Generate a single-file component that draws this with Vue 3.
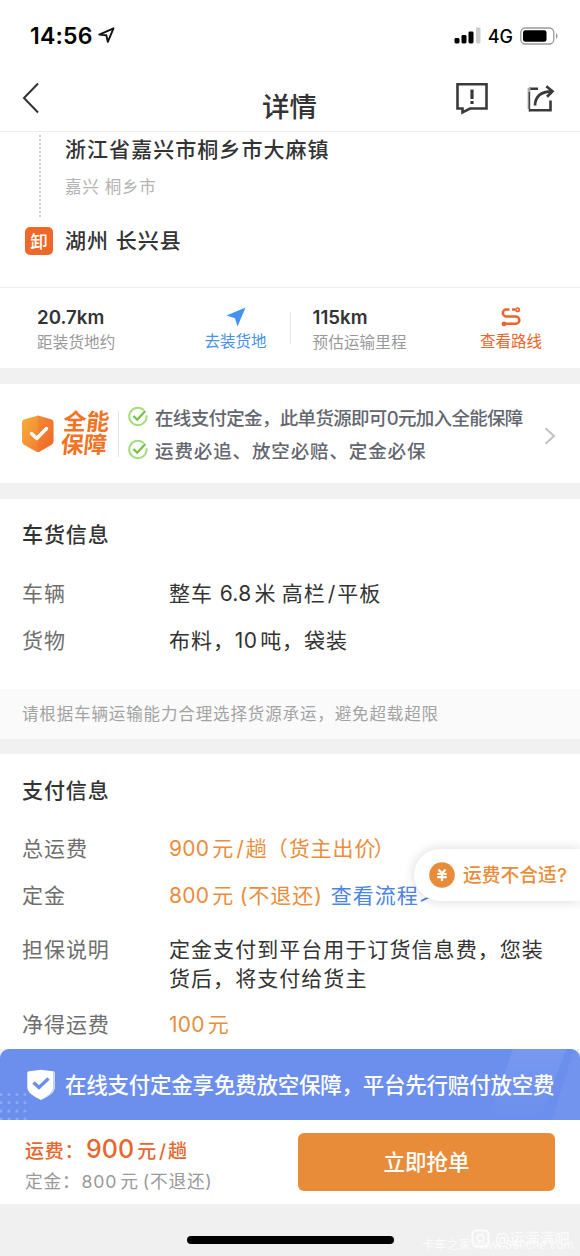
<script setup>
const dots = []
for (let r = 0; r < 4; r++) for (let c = 0; c < 4; c++) dots.push({ x: 1 + c * 8, y: 45.5 + r * 8.2 })
</script>

<template>
  <div class="page">
    <header class="top">
      <div class="status">
        <div class="status-left">
          <span class="time">14:56</span>
          <svg class="loc" width="17" height="17" viewBox="0 0 17 17"><path d="M1.300 7.600 15.500 1.300 9.800 14.800 8.300 8.200Z" fill="none" stroke="#111" stroke-width="1.900" stroke-linejoin="round" /></svg>
        </div>
        <div class="status-right">
          <svg width="28" height="18" viewBox="0 0 28 18">
            <rect x="0.5" y="11" width="5" height="5.5" rx="1.4" /><rect x="7.5" y="8" width="5" height="8.5" rx="1.4" />
            <rect x="14.5" y="4.5" width="5" height="12" rx="1.4" /><rect x="22" y="0.5" width="4.5" height="16" rx="1.4" fill="#ccc" />
          </svg>
          <span class="net">4G</span>
          <svg class="bat" width="39" height="18" viewBox="0 0 39 18">
            <rect x="0.8" y="1" width="33" height="16" rx="4.5" fill="none" stroke="#999" stroke-width="1.3" />
            <rect x="3" y="3.2" width="23.5" height="11.6" rx="2.4" /><path d="M36 6.3c2 .8 2 4.600 0 5.400z" fill="#999" />
          </svg>
        </div>
      </div>
      <div class="nav">
        <svg class="back" width="18" height="32" viewBox="0 0 18 32"><path d="M16 1.500 2 16 16 30.500" fill="none" stroke="#333" stroke-width="2" /></svg>
        <h1>详情</h1>
        <div class="tools">
          <svg width="34" height="33" viewBox="0 0 34 33">
            <path d="M2.500 2.300H31.500V26.500H15L7.500 30.300V26.500H2.500Z" fill="none" stroke="#3a3a3a" stroke-width="2.600" />
            <path d="M17 7.500V17M17 19V22" stroke="#3a3a3a" stroke-width="3.200" />
          </svg>
          <svg class="share" width="30" height="28" viewBox="0 0 30 28">
            <path d="M12 3.800H3M3 25.200H24.500V15.500" fill="none" stroke="#3a3a3a" stroke-width="2.600" />
            <path d="M3 3V24" stroke="#aaa" stroke-width="2.800" />
            <path d="M3.300 7V26.500" stroke="#3a3a3a" stroke-width="1.200" />
            <path d="M9 20.500C9.200 12 14 6.500 26 6.300M20.300 1.200 26.500 6.300 21 11.800" fill="none" stroke="#3a3a3a" stroke-width="2.700" />
          </svg>
        </div>
      </div>
    </header>

    <section class="route">
      <div class="from">
        <svg class="dash" width="2" height="86" viewBox="0 0 2 86"><path d="M1 3V85" stroke="#bbb" stroke-width="1.400" stroke-dasharray="2 2" /></svg>
        <div>
          <div class="place">浙江省嘉兴市桐乡市大麻镇</div>
          <div class="sub">嘉兴 桐乡市</div>
        </div>
      </div>
      <div class="to"><span class="badge">卸</span><span class="place">湖州 长兴县</span></div>
    </section>

    <section class="distance">
      <div class="km first"><b>20.7km</b><span>距装货地约</span></div>
      <div class="action blue">
        <svg width="20" height="20" viewBox="0 0 20 20"><path d="M19.500.500 11.500 19.500 9 11.200.500 8.500Z" fill="#4591f0" /></svg>
        <span>去装货地</span>
      </div>
      <i class="split"></i>
      <div class="km second"><b>115km</b><span>预估运输里程</span></div>
      <div class="action red">
        <svg width="20" height="20" viewBox="0 0 20 20">
          <g fill="none" stroke="#ed652c" stroke-width="2.500"><path d="M8.500 2.500H5.300a3.500 3.500 0 0 0 0 7H14.700a3.600 3.600 0 0 1 0 7.300H4M11 2.500H14" /><circle cx="16.600" cy="2.700" r="1.700" stroke-width="1.700" /></g>
          <circle cx="3" cy="16.900" r="2.400" fill="#ed652c" />
        </svg>
        <span>查看路线</span>
      </div>
    </section>

    <section class="protect">
      <svg width="34" height="38" viewBox="0 0 34 38">
        <defs><linearGradient id="sg" x1="0" y1="0" x2="1" y2=".6"><stop offset="0" stop-color="#f8b13c" /><stop offset="1" stop-color="#f0702c" /></linearGradient></defs>
        <path d="M17 .500 30.500 4.500Q32.500 5.200 32.500 7.500V26Q32.500 28.500 30.500 29.700L18.500 36.700Q17 37.500 15.500 36.700L3 29.700Q1 28.500 1 26V7.500Q1 5.200 3 4.500Z" fill="url(#sg)" />
        <path d="M17 .500 30.500 4.500Q32.500 5.200 32.500 7.500V26Q32.500 28.500 30.500 29.700L18.500 36.700L17 37Z" fill="#ef6a2c" opacity=".3" />
        <path d="M10.500 18.500 15.800 23.500 25.500 13.500" fill="none" stroke="#fff" stroke-width="3.500" stroke-linecap="round" stroke-linejoin="round" />
      </svg>
      <div class="brand"><span>全能</span><span>保障</span></div>
      <i class="bar"></i>
      <div class="perks">
        <div class="perk tight">
          <svg width="20" height="20" viewBox="0 0 20 20"><path d="M15.200 2.600A8.700 8.700 0 1 0 18.600 9" fill="none" stroke="#a3dd7b" stroke-width="2" stroke-linecap="round" /><path d="M5.500 9 9.200 12.700 17.300 4" fill="none" stroke="#74c044" stroke-width="2.200" /></svg>
          <span>在线支付定金，此单货源即可0元加入全能保障</span>
        </div>
        <div class="perk loose">
          <svg width="20" height="20" viewBox="0 0 20 20"><path d="M15.200 2.600A8.700 8.700 0 1 0 18.600 9" fill="none" stroke="#a3dd7b" stroke-width="2" stroke-linecap="round" /><path d="M5.500 9 9.200 12.700 17.300 4" fill="none" stroke="#74c044" stroke-width="2.200" /></svg>
          <span>运费必追、放空必赔、定金必保</span>
        </div>
      </div>
      <svg class="chev" width="12" height="18" viewBox="0 0 12 18"><path d="M1.500 1.200 10 9 1.500 16.800" fill="none" stroke="#c4c4c4" stroke-width="2.200" /></svg>
    </section>

    <section class="cargo">
      <h2>车货信息</h2>
      <div class="row"><span class="label">车辆</span><span>整车 <i class="n">6.8</i>米<i class="w"></i>高栏<i class="s">/</i>平板</span></div>
      <div class="row"><span class="label">货物</span><span>布料，<i class="n">10</i>吨，袋装</span></div>
      <div class="note">请根据车辆运输能力合理选择货源承运，避免超载超限</div>
    </section>

    <section class="pay">
      <h2>支付信息</h2>
      <div class="row"><span class="label">总运费</span><span class="orange"><i class="n">900</i>元<i class="s">/</i>趟<i class="open">（</i>货主出价<i class="close">）</i></span></div>
      <div class="row"><span class="label">定金</span><span class="orange"><i class="n">800</i>元<i class="w"></i>(不退还)</span><span class="link">查看流程&gt;</span></div>
      <div class="row explain"><span class="label">担保说明</span><span class="wide">定金支付到平台用于订货信息费，您装<br>货后，将支付给货主</span></div>
      <div class="row net-fee"><span class="label">净得运费</span><span class="orange"><i class="n">100</i>元</span></div>
      <div class="float">
        <svg width="26" height="26" viewBox="0 0 26 26"><circle cx="13" cy="13" r="12.800" fill="#e98c3a" /><path d="M9.500 7.500 13 11.500 16.500 7.500M8.300 12H17.700M8.300 15.200H17.700M13 11.500V19" fill="none" stroke="#fff" stroke-width="2.200" /></svg>
        <span>运费不合适?</span>
      </div>
    </section>

    <section class="promo">
      <svg class="deco" width="580" height="71" viewBox="0 0 580 71">
        <defs><linearGradient id="shine" x1="0" y1="0" x2="0" y2="1"><stop offset="0" stop-color="#fff" stop-opacity=".09" /><stop offset="1" stop-color="#fff" stop-opacity="0" /></linearGradient></defs>
        <path d="M513 0H566L540 71H488Z" fill="url(#shine)" /><path d="M574 0H580V71H552Z" fill="#fff" opacity=".05" />
        <circle v-for="(d, i) in dots" :key="i" :cx="d.x" :cy="d.y" r="1.500" fill="#8ea9f4" />
      </svg>
      <svg class="shield" width="28" height="32" viewBox="0 0 28 32">
        <path d="M14 .800Q19 1.500 26 2.200Q27.700 2.500 27.700 4V19Q27.700 24.500 14 31Q.300 24.500.300 19V4Q.300 2.500 2 2.200Q9 1.500 14 .800Z" fill="#fff" />
        <path d="M27.700 4V19Q27.700 24.500 14 31Q25.500 24 26 19V2.200Q27.700 2.500 27.700 4Z" fill="#c7d5fc" />
        <path d="M6.500 13.500 12 18.500 21.500 9.500" fill="none" stroke="#6b8fec" stroke-width="3.400" />
      </svg>
      <span>在线支付定金享免费放空保障，平台先行赔付放空费</span>
    </section>

    <section class="buy">
      <div class="prices">
        <div class="fee">运费：<b>900</b>元<i class="s">/</i>趟</div>
        <div class="deposit">定金：<i class="n">800</i>元<i class="p">(</i>不退还)</div>
      </div>
      <button>立即抢单</button>
    </section>

    <footer>
      <i class="home"></i>
      <div class="mark site">卡车之家 www.360che.com</div>
      <div class="mark forum">
        <svg width="20" height="20" viewBox="0 0 20 20"><rect x="1.500" y="1.500" width="16" height="16" rx="4" fill="none" stroke="#fff" stroke-width="2.200" /><circle cx="9.500" cy="9" r="3.500" fill="none" stroke="#fff" stroke-width="1.800" /></svg>
        <span>@运满满吧</span>
      </div>
    </footer>
  </div>
</template>

<style>
body { margin: 0; background: #fff; }
</style>

<style scoped>
.page { width: 580px; height: 1256px; overflow: hidden; background: #f1f1f1; color: #333; font-family: Inter, "Noto Sans CJK SC", sans-serif; display: flex; flex-direction: column; white-space: nowrap; }
.page > * { flex: none; box-sizing: border-box; }
h1, h2 { margin: 0; font-weight: 500; }
i { font-style: normal; }
svg { display: block; flex: none; }
.n { letter-spacing: .25px; margin-right: 3px; }
.s { margin: 0 1px 0 2px; }
.w { margin-left: 5.500px; }
.p { margin-left: 4px; }
.open { margin-left: -1px; }
.close { margin-left: -3px; }
.top { height: 132px; background: #fff; border-bottom: 1px solid #ececec; }
.status { height: 72px; display: flex; justify-content: space-between; align-items: center; padding: 0 22px 0 30px; }
.status-left, .status-right { display: flex; align-items: center; }
.time { font-size: 23px; font-weight: 600; color: #000; letter-spacing: .2px; }
.loc { margin-left: 5px; margin-top: -2px; }
.net { font-size: 18px; font-weight: 500; color: #000; margin-left: 6px; }
.bat { margin-left: 7px; margin-right: -1px; }
.nav { display: grid; grid-template-columns: 1fr auto 1fr; align-items: start; padding: 0 23px 0 22px; height: 59px; }
.back { margin-top: 10px; }
h1 { font-size: 27.500px; line-height: 34px; margin-top: 18px; font-weight: 500; }
.tools { display: flex; justify-content: flex-end; gap: 37px; margin: 10px 1px 0 0; }
.share { margin-top: 3px; }
.route { height: 156px; background: #fff; border-bottom: 1px solid #ececec; padding-left: 25px; }
.from { display: flex; height: 88px; }
.dash { margin-left: 13.500px; margin-right: 24.500px; }
.place { font-size: 21px; line-height: 34px; letter-spacing: 1.050px; font-weight: 500; }
.from .place { padding-top: 1px; }
.sub { font-size: 16.500px; line-height: 24px; letter-spacing: .7px; color: #b3b3b3; margin-top: 8px; }
.to { display: flex; align-items: center; height: 42px; gap: 12px; }
.badge { width: 28px; height: 28px; border-radius: 5px; background: #ee6829; color: #fff; font-size: 17.500px; line-height: 29px; text-align: center; font-weight: 500; }
.distance { height: 80px; background: #fff; display: flex; align-items: flex-start; padding: 19px 0 0 37px; }
.km { display: flex; flex-direction: column; }
.km b { font-size: 18.700px; line-height: 22px; font-weight: 600; }
.km span { font-size: 15.500px; line-height: 24px; color: #999; margin-top: 2px; letter-spacing: .2px; }
.km.first { width: 167px; }
.km.second { width: 167px; margin-left: 21.500px; }
.action { width: 63px; display: flex; flex-direction: column; align-items: center; font-size: 15.500px; line-height: 24px; }
.action span { margin-top: 3px; }
.blue { color: #4591f0; }
.red { color: #ed652c; }
.split { width: 1px; height: 32px; background: #e4e4e4; margin: 5px 0 0 23px; }
.protect { height: 99px; margin-top: 16px; background: #fff; display: flex; align-items: center; padding-left: 21px; }
.brand { display: flex; flex-direction: column; margin-left: 7px; width: 48px; color: #f37224; font-size: 23px; font-weight: 700; line-height: 23px; transform: skewX(-6deg); }
.bar { width: 1px; height: 46px; background: #e2e2e6; margin-left: 8px; }
.perks { margin-left: 9px; display: flex; flex-direction: column; gap: 6px; }
.perk { display: flex; align-items: center; height: 27px; gap: 7px; color: #63666f; font-size: 18.500px; font-weight: 500; width: 395px; }
.tight span { letter-spacing: -.68px; margin-top: -1px; }
.loose span { letter-spacing: .88px; }
.chev { margin: 5px 0 0 21px; }
.cargo { height: 240px; margin-top: 16px; background: #fff; padding-top: 19px; display: flex; flex-direction: column; }
h2 { font-size: 21px; line-height: 34px; letter-spacing: .9px; padding-left: 22px; }
.row { display: flex; padding-left: 22px; font-size: 21px; line-height: 30px; letter-spacing: .95px; margin-top: 17px; }
.wide { letter-spacing: 1.050px; }
h2 + .row { margin-top: 26px; }
.cargo h2 + .row { margin-top: 27px; }
.label { width: 147px; flex: none; color: #6e6e6e; }
.note { margin-top: auto; height: 50px; line-height: 50px; background: #fafafa; color: #a3a3a3; font-size: 16.500px; letter-spacing: .87px; padding-left: 22px; }
.pay { position: relative; height: 295px; margin-top: 15px; background: #fff; padding-top: 20px; }
.orange { color: #ea8d3b; }
.link { color: #4c83e8; margin-left: 8px; }
.explain { margin-top: 24px; line-height: 29px; }
.net-fee { margin-top: 17px; }
.float { position: absolute; top: 95px; right: 0; width: 166px; height: 52px; box-sizing: border-box; border-radius: 26px 0 0 26px; background: #fff; box-shadow: 0 0 12px rgba(0, 0, 0, .16); display: flex; align-items: center; padding-left: 15px; gap: 8px; color: #ea8d3b; font-size: 18.800px; font-weight: 500; }
.float span { margin-top: -3px; }
.promo { position: relative; height: 71px; background: #6c8fee; border-radius: 9px 9px 0 0; overflow: hidden; display: flex; align-items: center; padding-left: 27px; color: #fff; font-size: 21.500px; font-weight: 500; letter-spacing: -.23px; }
.promo span { position: relative; margin: -2px 0 0 10px; }
.deco { position: absolute; left: 0; top: 0; }
.shield { position: relative; }
.buy { height: 84px; background: #fff; display: flex; justify-content: space-between; align-items: flex-start; padding: 13px 25px 0; }
.prices { letter-spacing: .8px; }
.fee { color: #e9662c; font-size: 19px; line-height: 34px; font-weight: 500; margin-top: -1px; }
.fee b { font-size: 25px; font-weight: 500; margin: 0 3px 0 1.500px; letter-spacing: .1px; }
.deposit { color: #999; font-size: 17.700px; line-height: 25px; }
.deposit .n { letter-spacing: .8px; margin-left: 1px; }
button { width: 257px; height: 58px; border: 0; border-radius: 6px; background: #e98c3a; color: #fff; font: 500 21.500px/58px Inter, "Noto Sans CJK SC", sans-serif; padding: 0; }
footer { position: relative; height: 52px; background: #f0f0f0; display: flex; justify-content: center; }
.home { width: 207px; height: 8px; border-radius: 4px; background: #000; margin-top: 32px; }
.mark { position: absolute; color: #fff; }
.site { left: 422px; top: 33px; font: 12px/16px "Liberation Sans", "Noto Sans CJK SC", sans-serif; letter-spacing: .35px; opacity: .85; }
.forum { left: 471px; top: 25px; display: flex; align-items: center; gap: 4px; font-size: 15px; line-height: 20px; opacity: .85; }
</style>
